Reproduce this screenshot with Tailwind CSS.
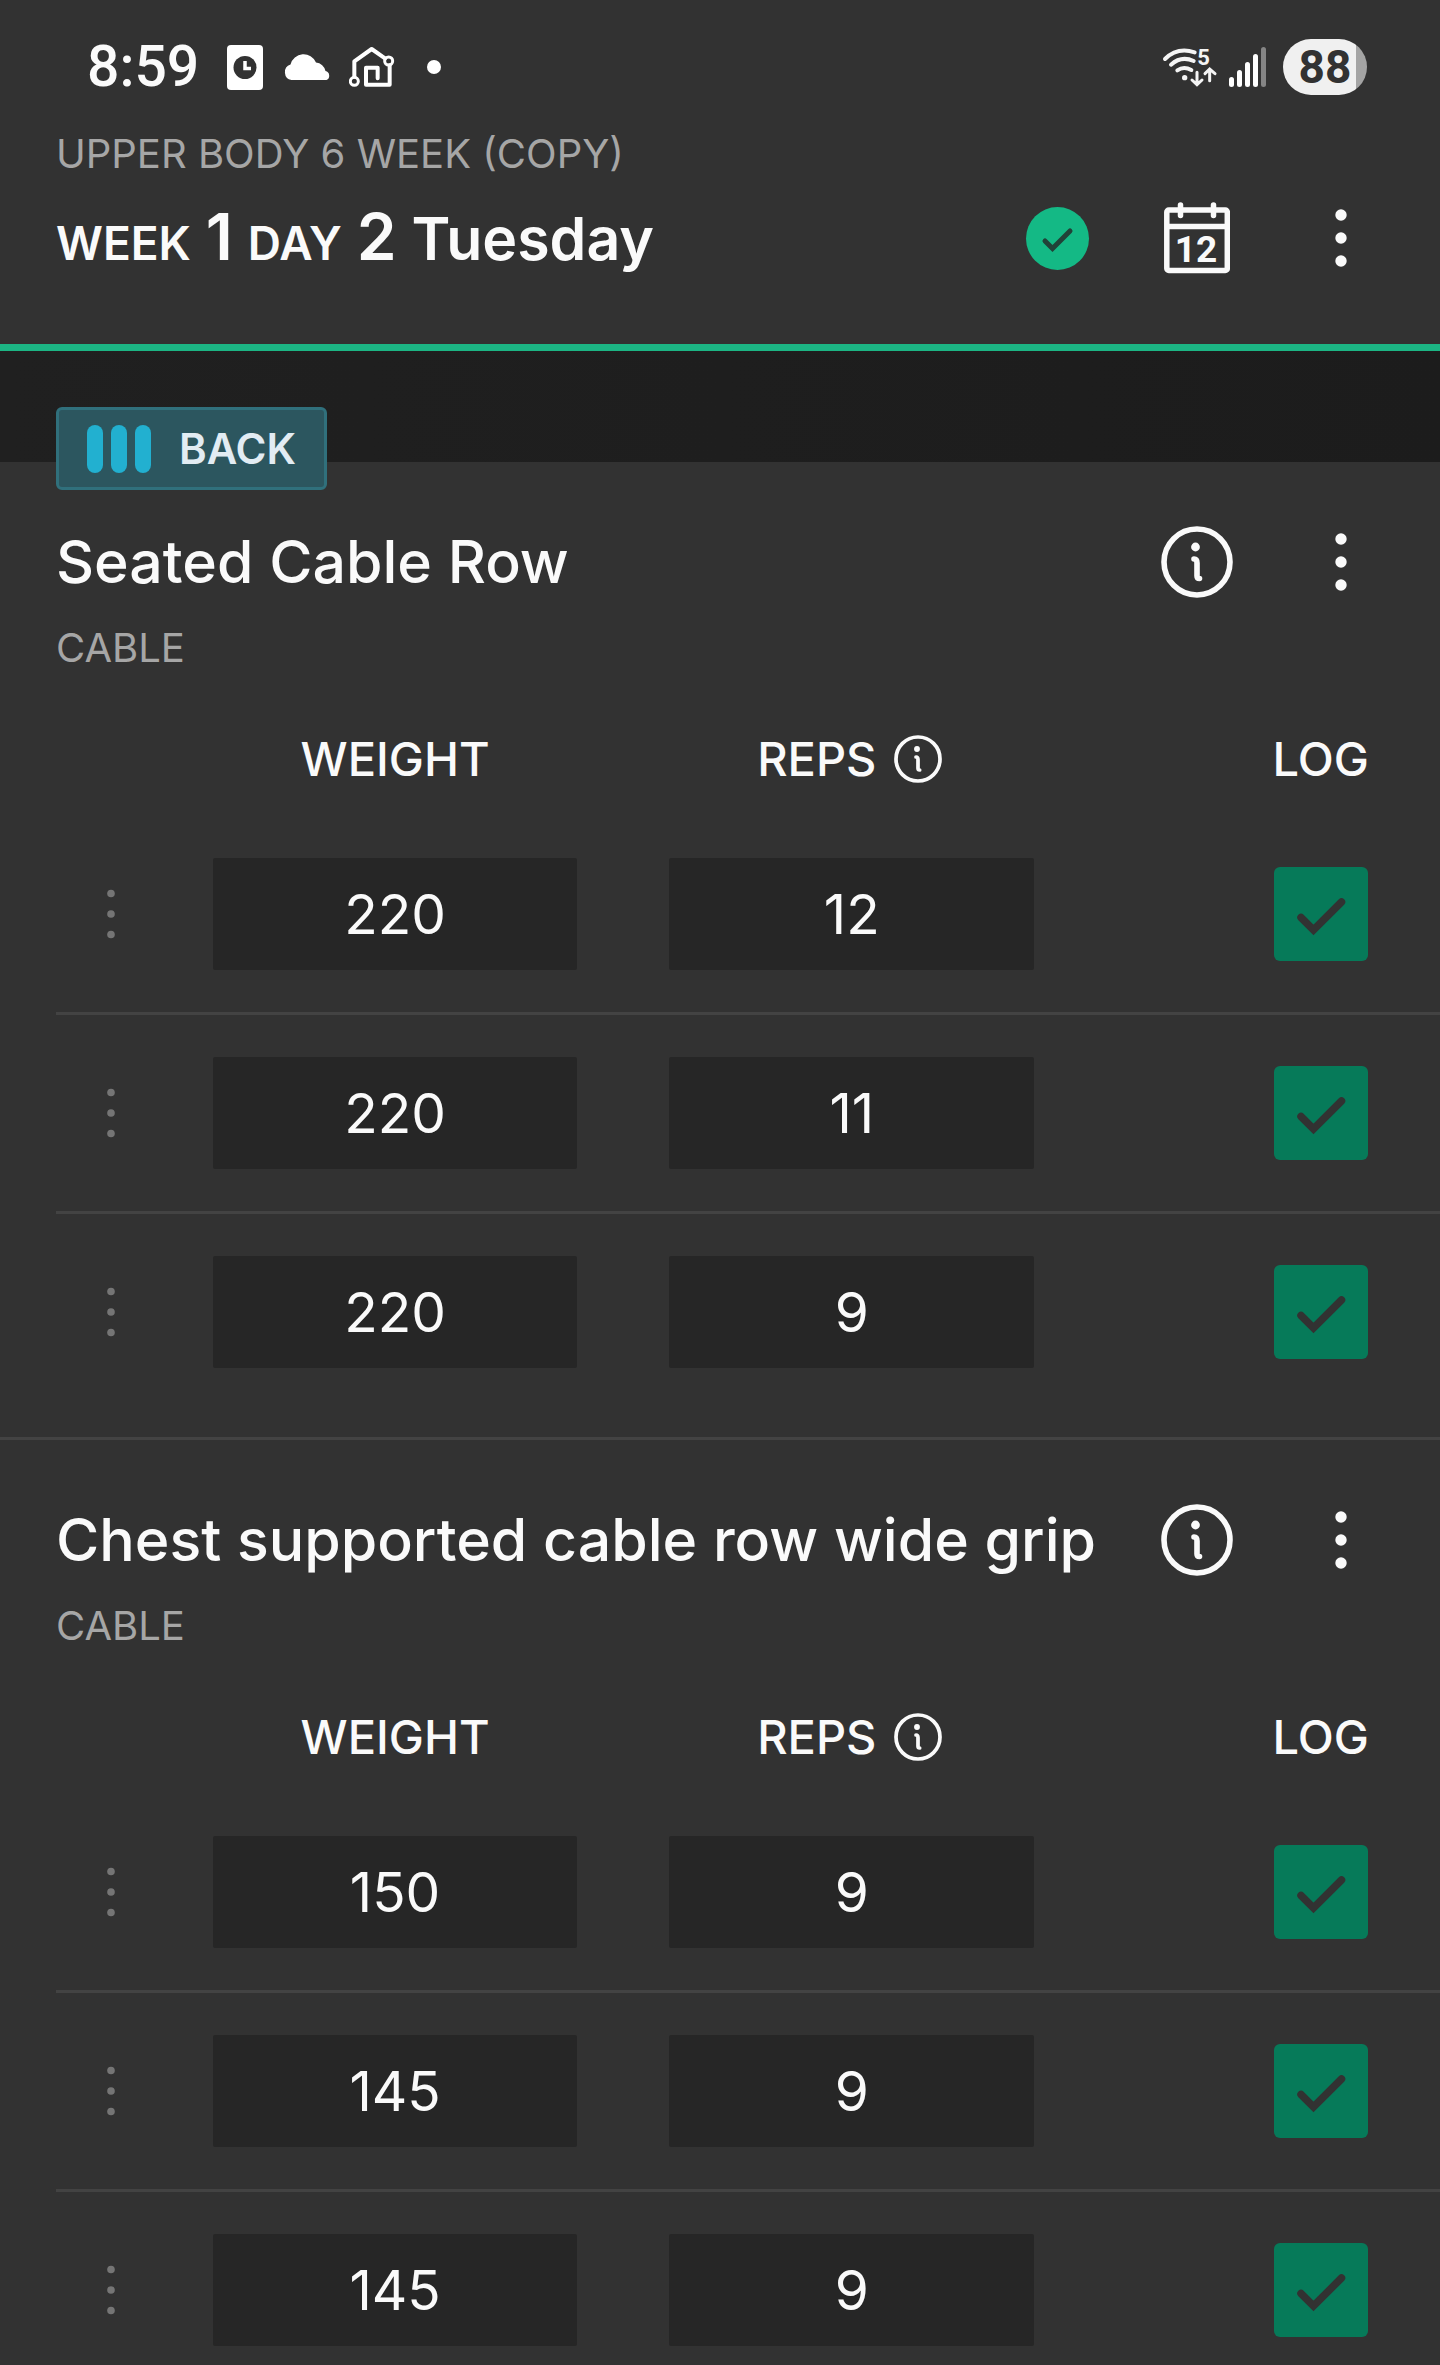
<!DOCTYPE html>
<html lang="en">

<head>
  <meta charset="UTF-8" />
  <meta name="viewport" content="width=device-width, initial-scale=1.0" />
  <title>Upper Body 6 Week - Day 2</title>
  <script src="https://cdn.jsdelivr.net/npm/@tailwindcss/browser@4"></script>
</head>

<body class="bg-[#323232] min-h-screen text-[#fafafa] font-['Inter','Liberation_Sans',sans-serif]">

  <!-- Shared icons -->
  <svg class="hidden">
    <symbol id="dots" viewBox="0 0 12 58">
      <circle cx="6" cy="6" r="5.7" />
      <circle cx="6" cy="29" r="5.7" />
      <circle cx="6" cy="52" r="5.7" />
    </symbol>
    <symbol id="grip" viewBox="0 0 8 50">
      <circle cx="4" cy="4.5" r="3.8" />
      <circle cx="4" cy="25" r="3.8" />
      <circle cx="4" cy="45.5" r="3.8" />
    </symbol>
    <symbol id="info" viewBox="0 0 72 72">
      <circle cx="36" cy="36" r="33" fill="none" stroke="currentColor" stroke-width="5.6" />
      <circle cx="34.5" cy="21" r="4.4" fill="currentColor" />
      <path d="M33 33q3 0 3 4v13q0 2.500 2.500 2.500" fill="none" stroke="currentColor" stroke-width="5.6" stroke-linecap="round" />
    </symbol>
    <symbol id="check" viewBox="0 0 94 94">
      <path d="M27 50.500 39.500 63 67.500 35" fill="none" stroke="#323232" stroke-width="7.500" stroke-linecap="round" />
    </symbol>
  </svg>

  <!-- Header -->
  <header class="pt-8 pb-[70px] border-b-7 border-[#1cb584]">

    <!-- Status bar -->
    <div class="h-[70px] flex justify-between items-center pl-[87px] pr-[73px]">
      <div class="flex items-center">
        <span class="font-['Roboto'] font-medium text-[57px] leading-[70px]">8:59</span>
        <svg class="w-9 h-[45px] ml-7" viewBox="0 0 36 45">
          <rect width="36" height="45" rx="4" fill="#fff" />
          <circle cx="18" cy="22.500" r="11.500" fill="#323232" />
          <path d="M18 16v7.500h6" fill="none" stroke="#fff" stroke-width="3.500" />
        </svg>
        <svg class="w-[50px] h-7 ml-5" viewBox="0 0 50 28">
          <path d="M8.500 27a8 8 0 0 1-1-15.500A13.500 13.500 0 0 1 33 9.500a10.500 10.500 0 0 1 9.500 8.500A4.800 4.800 0 0 1 43.500 27z" fill="#fff" />
        </svg>
        <svg class="w-[46px] h-[42px] ml-4" viewBox="926 78 138 126" fill="none" stroke="#fff" stroke-width="12">
          <path d="M942 170V124L994 87 1034 115M1048 136V194H977V143H1012V175" stroke-linecap="round" stroke-linejoin="round" />
          <circle cx="942" cy="184" r="12" stroke-width="9" />
          <circle cx="1045" cy="123" r="12" stroke-width="9" />
        </svg>
        <span class="w-3.5 h-3.5 ml-8 rounded-full bg-white"></span>
      </div>
      <div class="flex items-center">
        <svg class="w-[54px] h-10 overflow-visible" viewBox="69 87 162 120" fill="none" stroke="#f4f4f4" stroke-width="12" stroke-linecap="round">
          <path d="M75 123Q112 86 164 103M93 140Q124 112 161 129M112 157Q131 144 154 156" />
          <circle cx="134" cy="179" r="8" fill="#f4f4f4" stroke="none" />
          <path d="M171 163V199M156 186 171 200 186 186M209 188V154M195 167 209 153 225 167" stroke-width="9" />
          <text x="172" y="141" font-size="66" font-weight="700" font-family="Roboto" fill="#f4f4f4" stroke="none">5</text>
        </svg>
        <svg class="w-[38px] h-10 ml-3" viewBox="0 0 38 40" fill="#fff">
          <rect x="0" y="30" width="5" height="10" rx="2.500" />
          <rect x="8" y="23" width="5" height="17" rx="2.500" />
          <rect x="16" y="15" width="5" height="25" rx="2.500" />
          <rect x="24" y="7" width="5" height="33" rx="2.500" />
          <rect x="32" y="0" width="5" height="40" rx="2.500" fill="#858585" />
        </svg>
        <div class="w-[84px] h-14 ml-4 flex justify-center items-center rounded-full bg-linear-to-r from-[#f0f0f0] from-87% to-[#a4a4a4] to-87% text-[#323232] font-['Roboto'] font-bold text-[46px]">88</div>
      </div>
    </div>

    <p class="mt-[22px] pl-14 text-[40px] leading-[60px] text-[#a6a6a6]">UPPER BODY 6 WEEK (COPY)</p>

    <div class="mt-[18px] h-[72px] pl-14 pr-[63px] flex justify-between items-center">
      <h1 class="pt-1 font-semibold text-[59px] leading-[72px]"><span class="text-[46px]">WEEK</span> <span class="text-[64px]">1</span> <span class="text-[46px]">DAY</span> <span class="text-[64px]">2</span> Tuesday</h1>
      <div class="flex items-center gap-[72px]">
        <button class="w-[63px] h-[63px] rounded-full bg-[#14b985]" aria-label="Completed">
          <svg class="w-full h-full" viewBox="0 0 63 63">
            <path d="M19 34 26.500 41.500 44 24" fill="none" stroke="#214238" stroke-width="5" stroke-linecap="round" />
          </svg>
        </button>
        <button class="w-[72px] h-[72px] flex justify-center" aria-label="Calendar">
          <svg class="w-[66px] h-[72px]" viewBox="0 0 66 72" fill="none" stroke="#fafafa" stroke-width="5.500">
            <rect x="2.800" y="8" width="60.500" height="60.500" rx="2" />
            <path d="M3 24.500H63" />
            <path d="M16.500 3V13.500M49.500 3V13.500" stroke-linecap="round" />
            <text x="32" y="60" font-size="37" font-weight="700" font-family="Roboto" text-anchor="middle" fill="#fafafa" stroke="none">12</text>
          </svg>
        </button>
        <button class="w-[72px] h-[72px] flex justify-center items-center" aria-label="More">
          <svg class="w-3 h-[58px]" fill="currentColor"><use href="#dots" /></svg>
        </button>
      </div>
    </div>
  </header>

  <main>
    <!-- Muscle group badge, hangs over the first exercise -->
    <div class="h-[111px] pt-14 pl-14 bg-linear-to-r from-[#202020] to-[#1c1c1c]">
      <div class="relative w-fit h-[83px] px-7 flex items-center gap-7 rounded-md border-3 border-[#30707c] bg-[#2c565f]">
        <svg class="w-16 h-12" viewBox="0 0 64 48" fill="#22b0d0">
          <rect x="0" y="0" width="16" height="48" rx="8" />
          <rect x="24" y="0" width="16" height="48" rx="8" />
          <rect x="48" y="0" width="16" height="48" rx="8" />
        </svg>
        <span class="font-semibold text-[42px] leading-[60px] text-[#e2ecf3]">BACK</span>
      </div>
    </div>

    <!-- Exercise 1 -->
    <section class="pt-16 pb-[27px] border-b-3 border-[#434343]">
      <div class="h-[72px] pl-14 pr-[63px] flex justify-between items-center">
        <h2 class="font-medium text-[59px] leading-[72px] whitespace-nowrap">Seated Cable Row</h2>
        <div class="flex gap-[72px]">
          <button class="w-[72px] h-[72px]" aria-label="Exercise info"><svg class="w-full h-full"><use href="#info" /></svg></button>
          <button class="w-[72px] h-[72px] flex justify-center items-center" aria-label="More">
            <svg class="w-3 h-[58px]" fill="currentColor"><use href="#dots" /></svg>
          </button>
        </div>
      </div>
      <p class="mt-5 pl-14 text-[40px] leading-[60px] text-[#a6a6a6]">CABLE</p>
      <div class="mt-6 pl-14">
        <table class="w-full table-fixed border-separate border-spacing-0">
          <thead class="text-[47px] leading-[60px]">
            <tr class="h-[114px]">
              <td class="w-[8%]"></td>
              <th class="w-[33%] font-medium">WEIGHT</th>
              <th class="w-[33%] pr-1 font-medium">
                <div class="flex justify-center items-center gap-[18px]">REPS
                  <svg class="w-12 h-12"><use href="#info" /></svg>
                </div>
              </th>
              <th class="w-[26%] pr-[71px] text-right font-medium">LOG</th>
            </tr>
          </thead>
          <tbody>
            <tr>
              <td class="border-b-3 border-[#434343]"><svg class="w-2 h-[50px] mx-auto" fill="#757575"><use href="#grip" /></svg></td>
              <td class="py-[42px] px-[46px] border-b-3 border-[#434343]"><input class="block w-full h-28 rounded-xs bg-[#262626] text-center text-[55px]" type="text" value="220" aria-label="Weight, set 1" /></td>
              <td class="py-[42px] px-[46px] border-b-3 border-[#434343]"><input class="block w-full h-28 rounded-xs bg-[#262626] text-center text-[55px]" type="text" value="12" aria-label="Reps, set 1" /></td>
              <td class="pr-[72px] border-b-3 border-[#434343]">
                <label class="relative block w-[94px] h-[94px] ml-auto">
                  <input class="appearance-none block w-full h-full rounded-md bg-gray-500 checked:bg-[#067a59]" type="checkbox" checked aria-label="Log set 1" />
                  <svg class="absolute inset-0 w-full h-full pointer-events-none"><use href="#check" /></svg>
                </label>
              </td>
            </tr>
            <tr>
              <td class="border-b-3 border-[#434343]"><svg class="w-2 h-[50px] mx-auto" fill="#757575"><use href="#grip" /></svg></td>
              <td class="py-[42px] px-[46px] border-b-3 border-[#434343]"><input class="block w-full h-28 rounded-xs bg-[#262626] text-center text-[55px]" type="text" value="220" aria-label="Weight, set 2" /></td>
              <td class="py-[42px] px-[46px] border-b-3 border-[#434343]"><input class="block w-full h-28 rounded-xs bg-[#262626] text-center text-[55px]" type="text" value="11" aria-label="Reps, set 2" /></td>
              <td class="pr-[72px] border-b-3 border-[#434343]">
                <label class="relative block w-[94px] h-[94px] ml-auto">
                  <input class="appearance-none block w-full h-full rounded-md bg-gray-500 checked:bg-[#067a59]" type="checkbox" checked aria-label="Log set 2" />
                  <svg class="absolute inset-0 w-full h-full pointer-events-none"><use href="#check" /></svg>
                </label>
              </td>
            </tr>
            <tr>
              <td><svg class="w-2 h-[50px] mx-auto" fill="#757575"><use href="#grip" /></svg></td>
              <td class="py-[42px] px-[46px]"><input class="block w-full h-28 rounded-xs bg-[#262626] text-center text-[55px]" type="text" value="220" aria-label="Weight, set 3" /></td>
              <td class="py-[42px] px-[46px]"><input class="block w-full h-28 rounded-xs bg-[#262626] text-center text-[55px]" type="text" value="9" aria-label="Reps, set 3" /></td>
              <td class="pr-[72px]">
                <label class="relative block w-[94px] h-[94px] ml-auto">
                  <input class="appearance-none block w-full h-full rounded-md bg-gray-500 checked:bg-[#067a59]" type="checkbox" checked aria-label="Log set 3" />
                  <svg class="absolute inset-0 w-full h-full pointer-events-none"><use href="#check" /></svg>
                </label>
              </td>
            </tr>
          </tbody>
        </table>
      </div>
    </section>

    <!-- Exercise 2 -->
    <section class="pt-16">
      <div class="h-[72px] pl-14 pr-[63px] flex justify-between items-center">
        <h2 class="font-medium text-[59px] leading-[72px] whitespace-nowrap">Chest supported cable row wide grip</h2>
        <div class="flex gap-[72px]">
          <button class="w-[72px] h-[72px]" aria-label="Exercise info"><svg class="w-full h-full"><use href="#info" /></svg></button>
          <button class="w-[72px] h-[72px] flex justify-center items-center" aria-label="More">
            <svg class="w-3 h-[58px]" fill="currentColor"><use href="#dots" /></svg>
          </button>
        </div>
      </div>
      <p class="mt-5 pl-14 text-[40px] leading-[60px] text-[#a6a6a6]">CABLE</p>
      <div class="mt-6 pl-14">
        <table class="w-full table-fixed border-separate border-spacing-0">
          <thead class="text-[47px] leading-[60px]">
            <tr class="h-[114px]">
              <td class="w-[8%]"></td>
              <th class="w-[33%] font-medium">WEIGHT</th>
              <th class="w-[33%] pr-1 font-medium">
                <div class="flex justify-center items-center gap-[18px]">REPS
                  <svg class="w-12 h-12"><use href="#info" /></svg>
                </div>
              </th>
              <th class="w-[26%] pr-[71px] text-right font-medium">LOG</th>
            </tr>
          </thead>
          <tbody>
            <tr>
              <td class="border-b-3 border-[#434343]"><svg class="w-2 h-[50px] mx-auto" fill="#757575"><use href="#grip" /></svg></td>
              <td class="py-[42px] px-[46px] border-b-3 border-[#434343]"><input class="block w-full h-28 rounded-xs bg-[#262626] text-center text-[55px]" type="text" value="150" aria-label="Weight, set 1" /></td>
              <td class="py-[42px] px-[46px] border-b-3 border-[#434343]"><input class="block w-full h-28 rounded-xs bg-[#262626] text-center text-[55px]" type="text" value="9" aria-label="Reps, set 1" /></td>
              <td class="pr-[72px] border-b-3 border-[#434343]">
                <label class="relative block w-[94px] h-[94px] ml-auto">
                  <input class="appearance-none block w-full h-full rounded-md bg-gray-500 checked:bg-[#067a59]" type="checkbox" checked aria-label="Log set 1" />
                  <svg class="absolute inset-0 w-full h-full pointer-events-none"><use href="#check" /></svg>
                </label>
              </td>
            </tr>
            <tr>
              <td class="border-b-3 border-[#434343]"><svg class="w-2 h-[50px] mx-auto" fill="#757575"><use href="#grip" /></svg></td>
              <td class="py-[42px] px-[46px] border-b-3 border-[#434343]"><input class="block w-full h-28 rounded-xs bg-[#262626] text-center text-[55px]" type="text" value="145" aria-label="Weight, set 2" /></td>
              <td class="py-[42px] px-[46px] border-b-3 border-[#434343]"><input class="block w-full h-28 rounded-xs bg-[#262626] text-center text-[55px]" type="text" value="9" aria-label="Reps, set 2" /></td>
              <td class="pr-[72px] border-b-3 border-[#434343]">
                <label class="relative block w-[94px] h-[94px] ml-auto">
                  <input class="appearance-none block w-full h-full rounded-md bg-gray-500 checked:bg-[#067a59]" type="checkbox" checked aria-label="Log set 2" />
                  <svg class="absolute inset-0 w-full h-full pointer-events-none"><use href="#check" /></svg>
                </label>
              </td>
            </tr>
            <tr class="align-top">
              <td class="pt-[73px]"><svg class="w-2 h-[50px] mx-auto" fill="#757575"><use href="#grip" /></svg></td>
              <td class="pt-[42px] px-[46px]"><input class="block w-full h-28 rounded-xs bg-[#262626] text-center text-[55px]" type="text" value="145" aria-label="Weight, set 3" /></td>
              <td class="pt-[42px] px-[46px]"><input class="block w-full h-28 rounded-xs bg-[#262626] text-center text-[55px]" type="text" value="9" aria-label="Reps, set 3" /></td>
              <td class="pt-[51px] pr-[72px]">
                <label class="relative block w-[94px] h-[94px] ml-auto">
                  <input class="appearance-none block w-full h-full rounded-md bg-gray-500 checked:bg-[#067a59]" type="checkbox" checked aria-label="Log set 3" />
                  <svg class="absolute inset-0 w-full h-full pointer-events-none"><use href="#check" /></svg>
                </label>
              </td>
            </tr>
          </tbody>
        </table>
      </div>
    </section>
  </main>

</body>

</html>
